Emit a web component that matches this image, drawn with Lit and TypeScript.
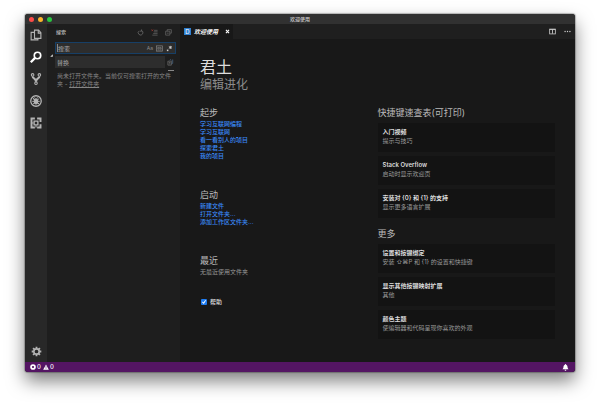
import { LitElement, html, css, svg } from "lit";
import { customElement, property } from "lit/decorators.js";
import { classMap } from "lit/directives/class-map.js";

const icons = {
  files: svg`<path d="M6 1.500h5.500l3 3.500v7.500H6z M11 1.500v4h3.500 M6 4.500H1.500v10h9v-2" stroke-width="1.500"/>`,
  search: svg`<circle cx="10" cy="6" r="4.300" stroke-width="2.200"/><path d="M6.800 9.200L1 15" stroke-width="3"/>`,
  git: svg`<circle cx="3.500" cy="2.500" r="1.700"/><circle cx="12.500" cy="2.500" r="1.700"/><circle cx="8" cy="13.500" r="1.700"/><path d="M3.500 4.500c0 3 4.500 2.500 4.500 7M12.500 4.500c0 3-4.500 2.500-4.500 7" stroke-width="2.600"/>`,
  debug: svg`<circle cx="8" cy="8" r="7" stroke-width="1.700"/><ellipse cx="8" cy="8.500" rx="2.300" ry="3.300" fill="currentColor"/><path d="M3 3l10 10M3 8.500h10M4 5l2 1.500M12 5l-2 1.500M4 12l2-1.500M12 12l-2-1.500M7 5l-1-1.800M9 5l1-1.800" stroke-width="1.200"/>`,
  blocks: svg`<path d="M6.500 2H2v12h4.500M9.500 2H14v4.500M9.500 14H14V9.500" stroke-width="2.600"/><path d="M5.500 5.500h5v5h-5z" stroke-width="1.800"/><path d="M2 8h3M8 14v-3" stroke-width="1.500"/>`,
  gear: svg`<circle cx="8" cy="8" r="3.900" stroke-width="2.400"/><path d="M8 1v3M8 12v3M1 8h3M12 8h3M3 3l2 2M11 11l2 2M3 13l2-2M11 5l2-2" stroke-width="2.600"/>`,
  refresh: svg`<path d="M10 3.500a5.300 5.300 0 1 1-5 .8M10.500 1v4h-4" stroke-width="1.800"/>`,
  clear: svg`<path d="M7 3h8M7 6.500h8M5 10h10M3 14h12" stroke-width="1.600"/><path d="M1 1l4 4M5 1L1 5" stroke="#9c3a32" stroke-width="1.600"/>`,
  collapse: svg`<path d="M5 5V1.500h9.500v8H11M1.500 5H11v9H1.500zM4 9.500h4.500" stroke-width="1.600"/>`,
  word: svg`<rect x="1" y="2" width="14" height="12" stroke-width="1.500"/><path d="M3 11.500h10M4 5.500h3v3.500h-3zM9 4v5h3v-3h-3" stroke-width="1.300"/>`,
  regex: svg`<path d="M10 2v7M6.500 3.500l7 4M13.500 3.500l-7 4" stroke-width="2"/><rect x="2" y="10.500" width="3.500" height="3.500" fill="currentColor" stroke="none"/>`,
  replaceAll: svg`<path d="M2 5h8v9H2zM4 8h4M4 11h4" stroke-width="1.500"/><path d="M6 3c1-2 3-2 4 0M13 1v9h-3" stroke="#4d6a88" stroke-width="1.600"/>`,
  split: svg`<rect x="1.500" y="2.500" width="13" height="11" stroke-width="1.800"/><path d="M1.500 3.500h13M8 3v10" stroke-width="2"/>`,
  more: svg`<g fill="currentColor" stroke="none"><circle cx="2.500" cy="8" r="1.600"/><circle cx="8" cy="8" r="1.600"/><circle cx="13.500" cy="8" r="1.600"/></g>`,
  close: svg`<path d="M3 3l10 10M13 3L3 13" stroke-width="3.600"/>`,
  error: svg`<circle cx="8" cy="8" r="7.500" fill="currentColor" stroke="none"/><path d="M5.500 5.500l5 5M10.500 5.500l-5 5" stroke="#541563" stroke-width="2.400"/>`,
  warning: svg`<path d="M8 1l7.500 14H.5z" fill="currentColor" stroke="none"/><path d="M8 6v4M8 11.500v2" stroke="#541563" stroke-width="1.600"/>`,
  bell: svg`<path d="M8 0c1 0 1.500.7 1.500 1.600C12 2.500 12.500 5 12.800 8c.2 1.500 1.200 2.500 2.200 4H1c1-1.500 2-2.500 2.200-4C3.500 5 4 2.500 6.500 1.600 6.500.7 7 0 8 0zM6 13h4c0 1.500-1 2.500-2 2.500s-2-1-2-2.500z" fill="currentColor" stroke="none"/>`,
  twisty: svg`<path d="M15 1v14H1z" fill="currentColor" stroke="none"/>`,
};
type IconName = keyof typeof icons;

@customElement("vs-icon")
class VsIcon extends LitElement {
  @property() name: IconName = "files";
  static styles = css`
    :host { display: block; flex: none; width: 7px; height: 7px; }
    svg { display: block; width: 100%; height: 100%; fill: none; stroke: currentColor; stroke-width: 1.4; }
  `;
  render() {
    return html`<svg viewBox="0 0 16 16" aria-hidden="true">${icons[this.name]}</svg>`;
  }
}

const activities: { icon: IconName; label: string }[] = [
  { icon: "files", label: "资源管理器" },
  { icon: "search", label: "搜索" },
  { icon: "git", label: "源代码管理" },
  { icon: "debug", label: "调试" },
  { icon: "blocks", label: "扩展" },
];

const linkSections = [
  { title: "起步", links: ["学习互联网编程", "学习互联网", "看一看别人的项目", "探索君土", "我的项目"] },
  { title: "启动", links: ["新建文件", "打开文件夹...", "添加工作区文件夹..."] },
];

const cardSections = [
  {
    title: "快捷键速查表(可打印)",
    cards: [
      ["入门视频", "提示与技巧"],
      ["Stack Overflow", "启动时显示欢迎页"],
      ["安装对 {0} 和 {1} 的支持", "显示更多语言扩展"],
    ],
  },
  {
    title: "更多",
    cards: [
      ["设置和按键绑定", "安装 ⇧⌘P 和 {1} 的设置和快捷键"],
      ["显示其他按键映射扩展", "其他"],
      ["颜色主题", "使编辑器和代码呈现你喜欢的外观"],
    ],
  },
];

@customElement("app-root")
class AppRoot extends LitElement {
  static styles = css`
    :host {
      display: flex;
      box-sizing: border-box;
      min-height: 100vh;
      padding: 14px 25px 35px;
      background: #fff;
      color: #ccc;
      font: 6px/8px Inter, "Noto Sans CJK SC", "DejaVu Sans", sans-serif;
      overflow: hidden;
    }
    * { box-sizing: border-box; }
    h1, h2, h3, p, ul { margin: 0; padding: 0; font-weight: 400; }
    ul { list-style: none; }
    button { display: block; padding: 0; border: 0; background: none; color: inherit; font: inherit; text-align: left; }
    .window {
      flex: 1;
      display: flex;
      flex-direction: column;
      min-width: 0;
      border-radius: 3px;
      background: #181818;
      box-shadow: 0 0 1px 1px rgba(0, 0, 0, 0.25), 0 9px 18px rgba(0, 0, 0, 0.5);
    }
    .titlebar {
      display: grid;
      grid-template-columns: 1fr auto 1fr;
      align-items: center;
      height: 10px;
      padding: 0 4px;
      border-radius: 3px 3px 0 0;
      background: #313131;
      font-size: 5px;
      font-weight: 500;
    }
    .lights { display: flex; gap: 4px; }
    .light { width: 5px; height: 5px; border-radius: 50%; background: #fc4b48; }
    .light.min { background: #fdb52b; }
    .light.max { background: #28c840; }
    .main { flex: 1; display: flex; min-height: 0; }
    .activity {
      display: flex;
      flex-direction: column;
      align-items: center;
      gap: 10px;
      width: 22px;
      padding: 5px 0;
      background: #282828;
      color: #b4b4b4;
    }
    .activity vs-icon { width: 12px; height: 12px; }
    .activity .active { color: #fff; }
    .activity .settings { margin-top: auto; }
    .activity .settings vs-icon { width: 11px; height: 11px; }
    .sidebar { width: 133px; padding: 0 4px 0 0; background: #1e1e1e; }
    .side-head { display: flex; align-items: center; gap: 7px; height: 16px; padding: 0 4px 0 9px; color: #6a6a6a; }
    .side-head h2 { flex: 1; font-size: 5px; font-weight: 500; color: #bbb; }
    .finder { display: flex; align-items: center; gap: 2px; margin-top: 2px; }
    .twisty { width: 6px; padding-left: 3px; color: #ddd; }
    .twisty vs-icon { width: 3px; height: 3px; }
    .fields { flex: 1; display: grid; gap: 2px; min-width: 0; }
    .field { display: flex; align-items: center; gap: 3px; height: 12px; padding: 0 2px 0 1px; border: 1px solid #2d2d2d; background: #2d2d2d; color: #888; }
    .field.focused { border-color: #173f66; }
    .field input { flex: 1; min-width: 0; width: 0; height: 10px; padding: 0; border: 0; outline: 0; background: none; color: #ccc; font: inherit; }
    .field input::placeholder { color: #aaa; opacity: 1; }
    .case { font-size: 5px; }
    .regex { color: #ccc; }
    .caret { border-left: 1px solid #888; height: 8px; margin-right: -3px; }
    .replace { display: flex; align-items: center; gap: 2px; color: #777; }
    .replace .field { flex: 1; }
    .replace vs-icon { margin-right: 2px; }
    .details { display: block; width: 6px; height: 1px; margin: 2px 2px 1px auto; background: #888; }
    .message { padding: 0 2px 0 10px; color: #858585; }
    .message a { color: inherit; }
    .editor { flex: 1; min-width: 0; }
    .tabs { display: flex; align-items: center; height: 15px; background: #1f1f1f; color: #ccc; }
    .tab { display: flex; align-items: center; height: 15px; padding: 0 3px 0 4px; background: #181818; color: #fff; font-weight: 700; font-style: italic; }
    .tab .logo { width: 7px; height: 7px; margin-right: 3px; background: #2f7fd0; color: #fff; line-height: 7px; text-align: center; font-style: normal; font-weight: 400; }
    .tab button { margin-left: 7px; }
    .tab button vs-icon { width: 5px; height: 5px; }
    .actions { display: flex; align-items: center; gap: 8px; margin-left: auto; padding-right: 4px; }
    .welcome { padding: 18px 20px 21px; }
    .welcome h1 { font-size: 16px; line-height: 20px; color: #ddd; }
    .welcome .subtitle { font-size: 12px; line-height: 16px; color: #8c8c8c; }
    .columns { display: grid; grid-template-columns: 1fr 1fr; margin-top: 14px; }
    h3 { font-size: 9px; line-height: 12px; color: #bbb; }
    .links { margin: 1px 0 29px; }
    .links a { color: #3a88f5; text-decoration: none; font-weight: 500; }
    .recent { margin: 1px 0 22px; color: #999; }
    .help { display: flex; align-items: center; gap: 3px; padding-left: 1px; color: #ddd; font-weight: 500; }
    .help input {
      appearance: none;
      width: 6px;
      height: 6px;
      margin: 0;
      border-radius: 1px;
      background: #1f7cf0;
      display: grid;
      place-items: center;
    }
    .help input:checked::before { content: ""; width: 4px; height: 4px; background: #fff; clip-path: polygon(0 55%, 20% 40%, 40% 65%, 80% 0, 100% 15%, 45% 100%); }
    .cards { display: grid; gap: 4px; margin: 4px 0 10px; }
    .cards:last-child { margin-bottom: 0; }
    .card { width: 100%; height: 29px; padding: 4px 5px 7px; background: #131313; line-height: 9px; color: #999; }
    .card strong { display: block; color: #ddd; font-weight: 600; }
    .status { display: flex; align-items: center; height: 10px; padding: 0 6px 0 5px; border-radius: 0 0 3px 3px; background: #541563; color: #fff; }
    .problems { display: flex; align-items: center; gap: 1px; font-weight: 500; }
    .problems vs-icon { width: 6px; height: 6px; }
    .problems .warn { margin-left: 1px; }
    .bell { margin-left: auto; }
  `;

  render() {
    return html`
      <div class="window">
        <header class="titlebar">
          <div class="lights"><span class="light"></span><span class="light min"></span><span class="light max"></span></div>
          <span>欢迎使用</span>
        </header>
        <div class="main">
          <nav class="activity">
            ${activities.map(
              (a) => html`<button aria-label=${a.label} class=${classMap({ active: a.icon === "search" })}>
                <vs-icon name=${a.icon}></vs-icon>
              </button>`
            )}
            <button class="settings" aria-label="管理"><vs-icon name="gear"></vs-icon></button>
          </nav>
          ${this.renderSidebar()}
          <main class="editor">
            <div class="tabs">
              <div class="tab">
                <span class="logo">D</span><span>欢迎使用</span>
                <button aria-label="关闭"><vs-icon name="close"></vs-icon></button>
              </div>
              <div class="actions">
                <button aria-label="拆分编辑器"><vs-icon name="split"></vs-icon></button>
                <button aria-label="更多操作"><vs-icon name="more"></vs-icon></button>
              </div>
            </div>
            ${this.renderWelcome()}
          </main>
        </div>
        <footer class="status">
          <button class="problems">
            <vs-icon name="error"></vs-icon><span>0</span>
            <vs-icon class="warn" name="warning"></vs-icon><span>0</span>
          </button>
          <button class="bell" aria-label="通知"><vs-icon name="bell"></vs-icon></button>
        </footer>
      </div>
    `;
  }

  private renderSidebar() {
    return html`<aside class="sidebar">
      <div class="side-head">
        <h2>搜索</h2>
        <button aria-label="刷新"><vs-icon name="refresh"></vs-icon></button>
        <button aria-label="清除"><vs-icon name="clear"></vs-icon></button>
        <button aria-label="折叠"><vs-icon name="collapse"></vs-icon></button>
      </div>
      <div class="finder">
        <button class="twisty" aria-label="切换替换"><vs-icon name="twisty"></vs-icon></button>
        <div class="fields">
          <div class="field focused">
            <span class="caret"></span>
            <input aria-label="搜索" placeholder="搜索" />
            <button class="case" aria-label="区分大小写">Aa</button>
            <button aria-label="全字匹配"><vs-icon name="word"></vs-icon></button>
            <button class="regex" aria-label="正则表达式"><vs-icon name="regex"></vs-icon></button>
          </div>
          <div class="replace">
            <div class="field"><input aria-label="替换" placeholder="替换" /></div>
            <button aria-label="全部替换"><vs-icon name="replaceAll"></vs-icon></button>
          </div>
        </div>
      </div>
      <button class="details" aria-label="切换搜索详细信息"></button>
      <p class="message">尚未打开文件夹。当前仅可搜索打开的文件夹 - <a href="#">打开文件夹</a></p>
    </aside>`;
  }

  private renderWelcome() {
    return html`<div class="welcome">
      <h1>君土</h1>
      <p class="subtitle">编辑进化</p>
      <div class="columns">
        <div>
          ${linkSections.map(
            (s) => html`<h3>${s.title}</h3>
              <ul class="links">${s.links.map((l) => html`<li><a href="#">${l}</a></li>`)}</ul>`
          )}
          <h3>最近</h3>
          <p class="recent">无最近使用文件夹</p>
          <label class="help"><input type="checkbox" checked />帮助</label>
        </div>
        <div>
          ${cardSections.map(
            (s) => html`<h3>${s.title}</h3>
              <div class="cards">
                ${s.cards.map(([t, d]) => html`<button class="card"><strong>${t}</strong>${d}</button>`)}
              </div>`
          )}
        </div>
      </div>
    </div>`;
  }
}
